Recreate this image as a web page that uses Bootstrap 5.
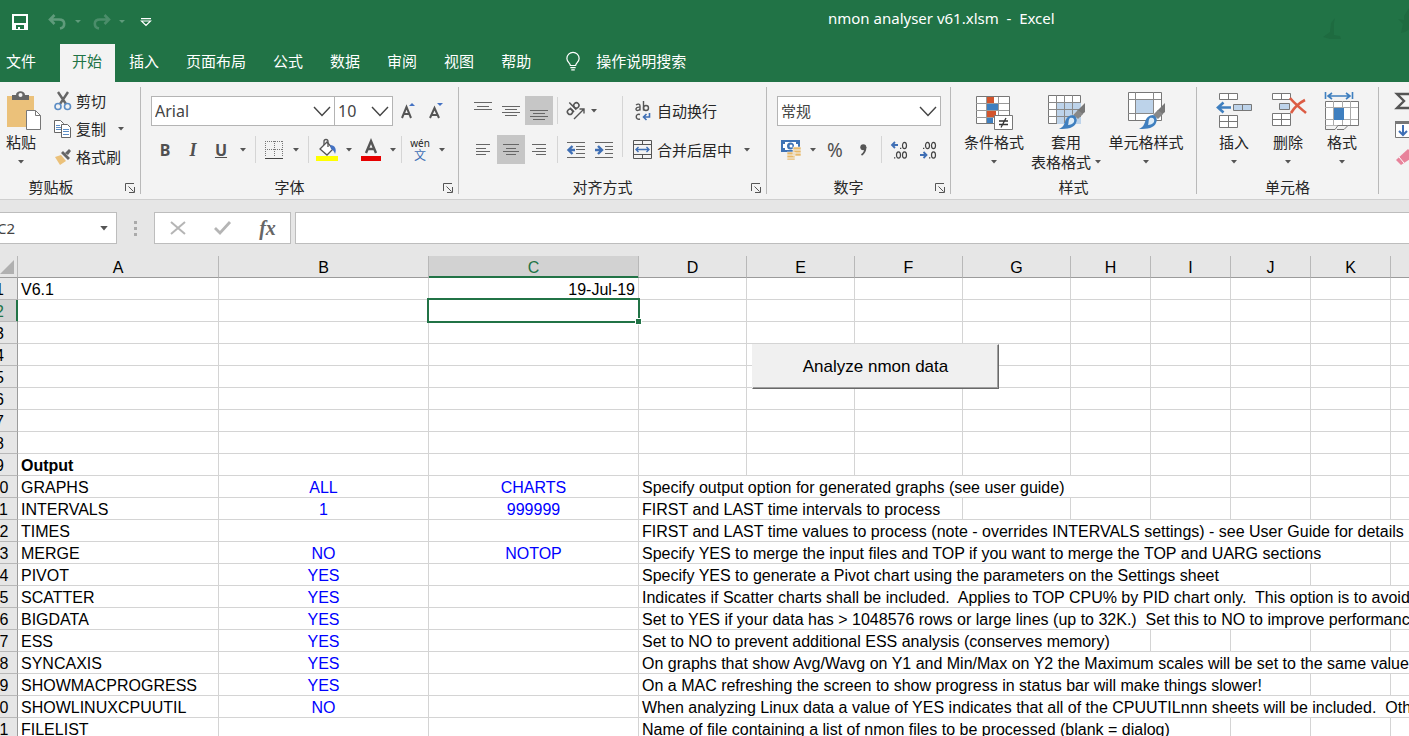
<!DOCTYPE html>
<html lang="zh-CN">
<head>
<meta charset="utf-8">
<meta name="viewport" content="width=device-width, initial-scale=1">
<title>nmon analyser v61.xlsm - Excel</title>
<link rel="stylesheet" href="https://cdn.jsdelivr.net/npm/bootstrap@5.3.0/dist/css/bootstrap.min.css">
<script src="https://cdn.jsdelivr.net/npm/bootstrap@5.3.0/dist/js/bootstrap.bundle.min.js"></script>
<style>
:root{--xl-green:#217346;--xl-ribbon:#f3f3f3;--xl-frame:#e6e6e6;--xl-ink:#262626}
body{font-family:"Noto Sans","Noto Sans CJK SC",sans-serif;font-size:15px;line-height:20px;color:var(--xl-ink);background:#fff}
.app{height:100vh}
button{background:none;border:0;padding:0;color:inherit;line-height:20px}
svg{display:block;flex:none;overflow:visible}
.titlebar{background:var(--xl-green);height:44px;color:#fff;padding-left:11px}
.title-text{left:828px;top:8px;white-space:pre}
.quick{gap:11px}
.tabs{background:var(--xl-green);height:38px;gap:2px}
.tabs .nav-link{color:#fff;padding:7px 13px 11px 12px;border-radius:0}
.tabs .file-tab{padding-left:6px;margin-right:9px}
.tabs .nav-link.active{background:var(--xl-ribbon);color:var(--xl-green)}
.ribbon{background:var(--xl-ribbon);border-bottom:1px solid #cfcfcf;height:118px;padding:5px 0}
.group{border-right:1px solid #b9b9b9;flex:none}
.group-body{height:90px;padding:9px 0 0 10px}
.group-foot{height:17px}
.group-foot .foot-name{line-height:20px;margin-top:2px}
.launch{width:20px}
.g-clip{width:141px}.g-font{width:318px}.g-align{width:308px}.g-num{width:184px}.g-style{width:246px}.g-cell{width:182px}
.g-clip .group-body{padding:0}
.g-clip .big{margin-top:4px}
.g-style .group-body{padding:4px 0 0 9px}
.g-cell .group-body{padding-top:4px}
.g-clip .foot-name{padding-right:18px}
.tools{height:29px}
.tools-2{margin-top:10px}
.tool{width:28px;height:29px;display:flex;align-items:center;justify-content:center}
.tool.on{background:#c6c6c6}
.face{color:#505050;font-size:16px}
.face-serif{font-family:"Liberation Serif",serif;font-size:18px}
.face-pct{font-size:19px;color:#505050}
.pin{font-size:10px;line-height:12px}
.han{font-size:12px;line-height:13px;color:#3f6fb5}
.drop{width:16px;height:29px;display:flex;align-items:center;justify-content:center}
.rule{width:1px;height:27px;background:#d5d5d5;flex:none}
.big{display:flex;flex-direction:column;align-items:center;flex:none}
.big .pic{height:40px;margin-bottom:1px;display:flex;align-items:flex-end}
.big .arrow{height:20px;display:flex;align-items:center}
.w-54{width:54px}.w-68{width:68px}.w-76{width:76px}.w-84{width:84px}.w-42{width:42px}
.small-cmd{display:flex;align-items:center;height:29px;gap:4px}
.stack .small-cmd{height:28px}
.wrap-cmds{margin-left:10px}
.form-select.combo{height:30px;border:1px solid #b4b4b4;border-radius:0;font-size:16px;line-height:20px;color:#444;padding:3px 24px 4px 3px;background-color:#fff;background-size:18px 11px;background-position:right 3px center;
--bs-form-select-bg-img:url("data:image/svg+xml,%3csvg xmlns='http://www.w3.org/2000/svg' viewBox='0 0 18 11'%3e%3cpath fill='none' stroke='%23444' stroke-width='1.4' d='M1 1l8 8.500 8-8.500'/%3e%3c/svg%3e")}
.combo-font{width:184px}.form-select.combo-size{width:59px;margin-left:-1px}.form-select.combo-num{width:164px;font-size:15px}
.fbar{background:var(--xl-frame);height:56px;padding-top:12px}
.fbox{height:32px;background:#fff;border:1px solid #bdbdbd}
.namebox{width:117px;border-left:0}
.namebox input{width:80px;border:0;padding:0;margin-left:-3px;font-size:15px;color:#444;background:none}
.fkeys{width:137px}
.fkeys button{width:45px;height:30px;display:flex;align-items:center;justify-content:center}
.fkeys .fx{font:italic bold 20px/28px "Liberation Serif",serif;color:#666}
.fline{font-size:15px;padding:0 6px;min-width:0}
.sheet{font-family:"Liberation Sans",Arial,sans-serif;font-size:16px;color:#000;min-height:0}
.cells{table-layout:fixed;width:1489px;margin-left:-18px;border-collapse:separate;border-spacing:0}
.cells th,.cells td{height:22px;padding:3px 3px 0 3px;line-height:18px;border-right:1px solid #d4d4d4;border-bottom:1px solid #d4d4d4;white-space:nowrap}
.cells th{padding:3px 0 0;text-align:center;font-weight:400;background:var(--xl-frame);border-color:#b8b8b8}
.cells thead th{border-bottom-color:#9b9b9b}
.cells tbody th{border-right-color:#9b9b9b}
.cells .picked{background:#d2d2d2;color:var(--xl-green)}
.cells thead .picked{box-shadow:inset 0 -1px var(--xl-green);border-bottom-color:var(--xl-green)}
.cells tbody .picked{box-shadow:inset -1px 0 var(--xl-green);border-right-color:var(--xl-green)}
.cells .val{text-align:center;color:#00f}
.corner{position:relative}
.corner svg{position:absolute;right:3px;bottom:3px}
.sel{position:absolute;inset:-2px;border:2px solid var(--xl-green);z-index:1}
.sel::after{content:"";position:absolute;right:-4px;bottom:-4px;width:7px;height:7px;background:var(--xl-green);border:1px solid #fff}
.run-btn{left:752px;top:88px;width:247px;height:45px;font-size:17px;background:#f0f0f0;border:1px solid;border-color:#f0f0f0 #696969 #696969 #f0f0f0;box-shadow:inset -1px -1px #a0a0a0;z-index:2}
</style>
</head>
<body>
<svg width="0" height="0" class="position-absolute" aria-hidden="true">
<symbol id="caret" viewBox="0 0 6 4"><path fill="#555" d="M0 0h6L3 3.500z"/></symbol>
<symbol id="launch" viewBox="0 0 10 10"><path fill="none" stroke="#555" d="M.5 8V.5H9M3.500 3.500l5 5M9.500 4v5.500H4"/></symbol>
<symbol id="brush" viewBox="0 0 28 28"><path fill="#777" d="M27 1v9l-7 6-4-4z"/><path fill="#fff" d="M19 9l4 4-5 5-5-4z"/><path fill="#888" d="M20 8l5 4-5 5-5-4z"/><path fill="#3f7fbf" d="M15 13c3 1 5 4 3 8-2 5-8 6-17 6 4-2 5-4 6-7 1-4 4-7 8-7z"/><path fill="#dcebf7" d="M12 16c3-1 5 1 4 4-1 2-4 3-6 3 1-2 0-5 2-7z"/></symbol>
</svg>
<div class="app d-flex flex-column overflow-hidden">

<header class="titlebar d-flex position-relative flex-shrink-0 overflow-hidden">
  <div class="quick d-flex align-items-center">
    <button type="button" aria-label="保存" class="me-2"><svg width="18" height="18" viewBox="0 0 18 18"><path fill="#fff" fill-rule="evenodd" d="M1 1h16v16H1zM3 3v7h12V3zM5 12v4h2v-2h2v2h4v-4z"/></svg></button>
    <button type="button" aria-label="撤消" class="d-flex align-items-center gap-2"><svg width="19" height="16" viewBox="0 0 19 16"><path fill="none" stroke="#5f9b7b" stroke-width="2.600" d="M6.500 1L2 5.500 6.500 10M2 5.500h9c7 0 6.500 8 1 9"/></svg><svg width="6" height="4" viewBox="0 0 6 4"><path fill="#5f9b7b" d="M0 0h6L3 3z"/></svg></button>
    <button type="button" aria-label="恢复" class="d-flex align-items-center gap-2"><svg width="19" height="16" viewBox="0 0 19 16"><path fill="none" stroke="#4b8d6a" stroke-width="2.600" d="M12.500 1L17 5.500 12.500 10M17 5.500H8c-7 0-6.500 8-1 9"/></svg><svg width="6" height="4" viewBox="0 0 6 4"><path fill="#5f9b7b" d="M0 0h6L3 3z"/></svg></button>
    <button type="button" aria-label="自定义快速访问工具栏" class="ms-1"><svg width="12" height="9" viewBox="0 0 12 9"><path fill="none" stroke="#fff" stroke-width="1.200" d="M1 .6h10M1.500 3h9L6 7.500z"/></svg></button>
  </div>
  <span class="title-text position-absolute">nmon analyser v61.xlsm  -  Excel</span>
  <svg class="ms-auto mt-3" width="90" height="28" viewBox="0 0 90 28"><path fill="#1e6b40" d="M16 2l-4 5-1 9-7 5 7 2h11l-1-3-6-1V7zM90-8l-5 8v4l-6-1 5 5-2 9 4-1 5-3z"/></svg>
</header>

<nav class="tabs nav flex-nowrap flex-shrink-0 overflow-hidden">
  <a class="nav-link file-tab" href="#">文件</a>
  <a class="nav-link active" href="#">开始</a>
  <a class="nav-link" href="#">插入</a>
  <a class="nav-link" href="#">页面布局</a>
  <a class="nav-link" href="#">公式</a>
  <a class="nav-link" href="#">数据</a>
  <a class="nav-link" href="#">审阅</a>
  <a class="nav-link" href="#">视图</a>
  <a class="nav-link" href="#">帮助</a>
  <a class="nav-link d-flex ms-2 gap-3" href="#"><svg width="14" height="22" viewBox="0 0 16 22" fill="none" stroke="#fff" stroke-width="1.400"><path d="M5 15c0-3-4-4-4-8a7 7 0 0 1 14 0c0 4-4 5-4 8zM5 17.500h6M6 20h4"/></svg>操作说明搜索</a>
</nav>

<section class="ribbon d-flex flex-shrink-0 overflow-hidden">
  <div class="group g-clip">
    <div class="group-body d-flex">
      <button type="button" class="big w-42"><span class="pic"><svg width="42" height="40" viewBox="-4 0 42 40"><path fill="#ebc17a" d="M3 5h27v31H3z"/><path fill="#666" d="M8 4h4c0-5 9-5 9 0h4v5H8z"/><circle cx="16.500" cy="4" r="2" fill="#f3f3f3"/><path fill="#fff" stroke="#777" d="M22.500 19.500h9l5 5v14h-14z"/><path fill="none" stroke="#777" d="M31.500 19.500v5h5"/></svg></span>粘贴<span class="arrow"><svg width="6" height="4"><use href="#caret"/></svg></span></button>
      <div class="stack ms-2 ps-1">
        <button type="button" class="small-cmd"><svg width="18" height="20" viewBox="0 0 18 20" fill="none"><path stroke="#666" stroke-width="2.400" d="M4 1l8 12M14 1L6 13"/><circle cx="4" cy="15.500" r="3" stroke="#5b8cc4" stroke-width="1.600"/><circle cx="13.500" cy="15.500" r="3" stroke="#5b8cc4" stroke-width="1.600"/></svg>剪切</button>
        <button type="button" class="small-cmd"><svg width="18" height="20" viewBox="0 0 18 20" fill="#fff" stroke="#666"><path d="M.5 1.500h6l3 3v9h-9z"/><path stroke="#5b8cc4" d="M2 6.500h4M2 8.500h5M2 10.500h5"/><path d="M7.500 5.500h6l3 3v10h-9z"/><path stroke="#5b8cc4" d="M9 10.500h6M9 12.500h6M9 15.500h6"/></svg>复制<svg class="ms-2" width="6" height="4"><use href="#caret"/></svg></button>
        <button type="button" class="small-cmd"><svg width="18" height="18" viewBox="0 0 18 18"><path fill="#ebc17a" d="M1 9l6-2 5 6-6 4z"/><path fill="#666" d="M7 5l2-2 7 7-2 2zM11 5l4-4 2 2-3 4z"/></svg>格式刷</button>
      </div>
    </div>
    <div class="group-foot d-flex align-items-center"><span class="foot-name flex-grow-1 text-center">剪贴板</span><button type="button" class="launch" aria-label="剪贴板设置"><svg class="mx-auto mt-1" width="10" height="10"><use href="#launch"/></svg></button></div>
  </div>

  <div class="group g-font">
    <div class="group-body">
      <div class="tools d-flex">
        <select class="form-select combo combo-font" aria-label="字体"><option>Arial</option></select>
        <select class="form-select combo combo-size" aria-label="字号"><option>10</option></select>
        <button type="button" class="tool" aria-label="增大字号"><svg width="14" height="18" viewBox="0 0 14 18"><path fill="none" stroke="#555" stroke-width="2" d="M2 16L6.500 5 11 16M3.500 12h6"/><path fill="#4472c4" d="M9 4l3-3 3 3z"/></svg></button>
        <button type="button" class="tool" aria-label="减小字号"><svg width="14" height="18" viewBox="0 0 14 18"><path fill="none" stroke="#555" stroke-width="2" d="M2 16L6.500 6l4.500 10M3.500 13h6"/><path fill="#4472c4" d="M9 1h6l-3 3z"/></svg></button>
      </div>
      <div class="tools tools-2 d-flex align-items-center">
        <button type="button" class="tool face fw-bold">B</button>
        <button type="button" class="tool face face-serif fw-bold fst-italic">I</button>
        <button type="button" class="tool face fw-bold text-decoration-underline">U</button>
        <button type="button" class="drop" aria-label="下划线样式"><svg width="6" height="4"><use href="#caret"/></svg></button>
        <span class="rule ms-1"></span>
        <button type="button" class="tool ms-1" aria-label="边框"><svg width="18" height="18" viewBox="0 0 18 18" fill="none" stroke="#777"><path stroke-dasharray="1 1" d="M.5 0v16M17.500 0v16M0 .5h18M9.500 0v16M0 8.500h18"/><path stroke="#444" d="M0 17.500h18"/></svg></button>
        <button type="button" class="drop" aria-label="边框样式"><svg width="6" height="4"><use href="#caret"/></svg></button>
        <span class="rule ms-1"></span>
        <button type="button" class="tool ms-1" aria-label="填充颜色"><svg width="22" height="22" viewBox="0 0 22 22"><path fill="#fff" stroke="#555" stroke-width="1.300" d="M11 3l6 7-6 6-7-6z"/><path fill="none" stroke="#555" stroke-width="1.300" d="M8 6V2.500a2 2 0 0 1 4 0V8"/><path fill="#4472c4" d="M14 6c5 0 7 4 5 9-1-3-2-4-4-5z"/><path fill="#ff0" d="M0 17h22v5H0z"/></svg></button>
        <button type="button" class="drop" aria-label="填充颜色选择"><svg width="6" height="4"><use href="#caret"/></svg></button>
        <button type="button" class="tool" aria-label="字体颜色"><svg width="20" height="22" viewBox="0 0 20 22"><path fill="none" stroke="#555" stroke-width="2.400" d="M5 14L10 2l5 12M7 10h6"/><path fill="#e60000" d="M0 17h20v5H0z"/></svg></button>
        <button type="button" class="drop" aria-label="字体颜色选择"><svg width="6" height="4"><use href="#caret"/></svg></button>
        <span class="rule"></span>
        <button type="button" class="tool ms-1 flex-column" aria-label="拼音"><span class="pin">wén</span><span class="han">文</span></button>
        <button type="button" class="drop" aria-label="拼音设置"><svg width="6" height="4"><use href="#caret"/></svg></button>
      </div>
    </div>
    <div class="group-foot d-flex align-items-center"><span class="foot-name flex-grow-1 text-center">字体</span><button type="button" class="launch" aria-label="字体设置"><svg class="mx-auto mt-1" width="10" height="10"><use href="#launch"/></svg></button></div>
  </div>

  <div class="group g-align">
    <div class="group-body d-flex">
      <div>
        <div class="tools d-flex align-items-center">
          <button type="button" class="tool" aria-label="顶端对齐"><svg width="18" height="18" viewBox="0 0 18 18" stroke="#666"><path d="M0 .5h18M3 4.500h12M0 7.500h18"/></svg></button>
          <button type="button" class="tool" aria-label="垂直居中"><svg width="18" height="18" viewBox="0 0 18 18" stroke="#666"><path d="M0 4.500h18M3 7.500h12M0 10.500h18M3 13.500h12"/></svg></button>
          <button type="button" class="tool on" aria-label="底端对齐"><svg width="18" height="18" viewBox="0 0 18 18" stroke="#666"><path d="M0 8.500h18M3 11.500h12M0 14.500h18M3 17.500h12"/></svg></button>
          <span class="rule ms-1"></span>
          <button type="button" class="tool ms-1" aria-label="方向"><svg width="20" height="20" viewBox="0 0 20 20"><g fill="none" stroke="#555" stroke-width="1.500" transform="translate(4 15) rotate(-45)"><circle cx="3" cy="-3" r="2.600"/><path d="M5.800-6V0M9-10V0"/><circle cx="12" cy="-3" r="2.600"/></g><path fill="none" stroke="#555" stroke-width="1.400" d="M8 18L18 8M13.500 8H18v4.500"/></svg></button>
          <button type="button" class="drop" aria-label="方向选择"><svg class="me-2" width="6" height="4"><use href="#caret"/></svg></button>
        </div>
        <div class="tools tools-2 d-flex align-items-center">
          <button type="button" class="tool" aria-label="左对齐"><svg width="16" height="16" viewBox="0 0 16 16" stroke="#666"><path d="M1 2.500h14M1 6.500h10M1 9.500h14M1 12.500h10"/></svg></button>
          <button type="button" class="tool on" aria-label="居中"><svg width="16" height="16" viewBox="0 0 16 16" stroke="#666"><path d="M0 2.500h16M3 6.500h10M0 9.500h16M3 12.500h10"/></svg></button>
          <button type="button" class="tool" aria-label="右对齐"><svg width="16" height="16" viewBox="0 0 16 16" stroke="#666"><path d="M1 2.500h14M5 6.500h10M1 9.500h14M5 12.500h10"/></svg></button>
          <span class="rule ms-1"></span>
          <button type="button" class="tool ms-1" aria-label="减少缩进量"><svg width="18" height="18" viewBox="0 0 18 18" fill="none" stroke="#666"><path d="M0 1.500h18M9 5.500h9M9 8.500h9M9 12.500h9M0 16.500h18"/><path stroke="#3f6fb5" stroke-width="2.400" d="M8 9H2M5.500 5L1.500 9l4 4"/></svg></button>
          <button type="button" class="tool" aria-label="增加缩进量"><svg width="18" height="18" viewBox="0 0 18 18" fill="none" stroke="#666"><path d="M0 1.500h18M10 5.500h8M10 8.500h8M10 12.500h8M0 16.500h18"/><path stroke="#3f6fb5" stroke-width="2.400" d="M0 9h6M3 5l4 4-4 4"/></svg></button>
        </div>
      </div>
      <span class="rule h-75 ms-1"></span>
      <div class="wrap-cmds">
        <button type="button" class="small-cmd"><svg width="20" height="22" viewBox="0 0 20 22" fill="none" stroke="#555" stroke-width="1.400"><path d="M3 5c2-1.500 4-1 4 1v4.500M7 7.200c-5-.4-5 3.600-2 3.200 1 0 2-.8 2-1.800M10.500 1v9.500"/><circle cx="13" cy="8" r="2.500"/><path d="M7 14.500c-5-1.500-5 6 0 4.500"/><path stroke="#3f6fb5" stroke-width="1.600" d="M16.500 13v4H11M13.500 14L10.500 17l3 3"/></svg>自动换行</button>
        <button type="button" class="small-cmd tools-2"><svg width="20" height="20" viewBox="0 0 20 20" fill="none" stroke="#555"><path d="M.5.5h18v18H.500zM.5 4.500h18M.5 14.500h18M9.500 .5v4M9.500 14.500v4"/><path stroke="#3f6fb5" stroke-width="1.400" d="M3 9.500h13M5.500 7L3 9.500 5.500 12M13.500 7L16 9.500 13.500 12"/></svg>合并后居中<svg class="ms-2" width="6" height="4"><use href="#caret"/></svg></button>
      </div>
    </div>
    <div class="group-foot d-flex align-items-center"><span class="foot-name flex-grow-1 text-center">对齐方式</span><button type="button" class="launch" aria-label="对齐设置"><svg class="mx-auto mt-1" width="10" height="10"><use href="#launch"/></svg></button></div>
  </div>

  <div class="group g-num">
    <div class="group-body">
      <div class="tools"><select class="form-select combo combo-num" aria-label="数字格式"><option>常规</option></select></div>
      <div class="tools tools-2 d-flex align-items-center">
        <button type="button" class="tool" aria-label="会计数字格式"><svg width="20" height="20" viewBox="0 0 20 20"><path fill="#3f73b5" d="M0 0h19v12H0z"/><path fill="#fff" d="M2 2h15v8H2z"/><circle cx="9.500" cy="6" r="3.500" fill="#3f73b5"/><circle cx="10" cy="6" r="1.500" fill="#fff"/><path fill="#3f73b5" d="M2 2h2v2H2zM15 2h2v2h-2zM2 8h2v2H2z"/><path fill="#e8b96a" stroke="#f3f3f3" stroke-width=".6" d="M12 7h8v3h-8zM12 10h8v3h-8zM6 12h8v3H6zM12 13h8v3h-8zM6 15h8v3H6zM6 18h8v2H6z"/></svg></button>
        <button type="button" class="drop" aria-label="会计格式选择"><svg width="6" height="4"><use href="#caret"/></svg></button>
        <button type="button" class="tool face-pct">%</button>
        <button type="button" class="tool" aria-label="千位分隔样式"><svg width="7" height="12" viewBox="0 0 7 12"><circle cx="3.300" cy="3.300" r="3" fill="#555"/><path fill="none" stroke="#555" stroke-width="1.800" d="M5.500 3c0 4-1 6-4 8"/></svg></button>
        <span class="rule ms-1"></span>
        <button type="button" class="tool ms-1" aria-label="增加小数位数"><svg width="18" height="20" viewBox="0 0 18 20" fill="none" stroke="#444" stroke-width="1.200"><ellipse cx="13.500" cy="5.500" rx="2" ry="3.200"/><ellipse cx="7.500" cy="15" rx="2" ry="3.200"/><ellipse cx="13.500" cy="15" rx="2" ry="3.200"/><path d="M9 8.300h1.300M3 17.800h1.300"/><path stroke="#3f6fb5" stroke-width="1.800" d="M7 5H1M4 2L1 5l3 3"/></svg></button>
        <button type="button" class="tool" aria-label="减少小数位数"><svg width="18" height="20" viewBox="0 0 18 20" fill="none" stroke="#444" stroke-width="1.200"><ellipse cx="8.500" cy="5.500" rx="2" ry="3.200"/><ellipse cx="14.500" cy="5.500" rx="2" ry="3.200"/><ellipse cx="14.500" cy="15" rx="2" ry="3.200"/><path d="M4 8.300h1.300M10 17.800h1.300"/><path stroke="#3f6fb5" stroke-width="1.800" d="M1 15h6M4.500 12l3 3-3 3"/></svg></button>
      </div>
    </div>
    <div class="group-foot d-flex align-items-center"><span class="foot-name flex-grow-1 text-center">数字</span><button type="button" class="launch" aria-label="数字设置"><svg class="mx-auto mt-1" width="10" height="10"><use href="#launch"/></svg></button></div>
  </div>

  <div class="group g-style">
    <div class="group-body d-flex">
      <button type="button" class="big w-68"><span class="pic"><svg width="38" height="38" viewBox="0 0 38 38"><path fill="#fff" stroke="#777" d="M1.500 3.500h33v27h-33z"/><path stroke="#999" d="M1 10.500h33M1 17.500h33M1 24.500h33M11.500 4v26M23.500 4v26"/><path fill="#d2552d" d="M12 4h7v6h-7zM12 18h9v6h-9z"/><path fill="#3f7fbf" d="M12 11h11v6H12zM12 25h6v5h-6z"/><path fill="#fff" stroke="#777" d="M19.500 22.500h18v14h-18z"/><path fill="none" stroke="#333" stroke-width="1.300" d="M24 28h9M24 31.500h9M31 25l-5 9.500"/></svg></span>条件格式<span class="arrow"><svg width="6" height="4"><use href="#caret"/></svg></span></button>
      <button type="button" class="big w-76"><span class="pic"><svg width="38" height="38" viewBox="0 0 38 38"><path fill="#fff" stroke="#777" d="M1.500 2.500h32v28h-32z"/><path fill="#bdd3ea" d="M10 9h24v22H10z"/><path stroke="#888" d="M1 9.500h33M1 16.500h33M1 23.500h33M9.500 2v28M17.500 2v28M25.500 2v28"/><svg x="11" y="9" width="28" height="28"><use href="#brush"/></svg></svg></span>套用<span class="arrow gap-1 text-nowrap">表格格式<svg width="6" height="4"><use href="#caret"/></svg></span></button>
      <button type="button" class="big w-84"><span class="pic"><svg width="38" height="40" viewBox="0 0 38 40"><path fill="#fff" stroke="#777" d="M1.500 1.500h33v28h-33z"/><path fill="#bdd3ea" d="M9 8h17v14H9z"/><path stroke="#888" d="M1 8.500h33M1 22.500h33M8.500 1v28M26.500 1v28"/><svg x="11" y="11" width="28" height="28"><use href="#brush"/></svg></svg></span>单元格样式<span class="arrow"><svg width="6" height="4"><use href="#caret"/></svg></span></button>
    </div>
    <div class="group-foot d-flex align-items-center"><span class="foot-name flex-grow-1 text-center">样式</span></div>
  </div>

  <div class="group g-cell">
    <div class="group-body d-flex">
      <button type="button" class="big w-54"><span class="pic"><svg width="38" height="40" viewBox="0 0 38 40"><g fill="#fff" stroke="#777"><path d="M4.500 2.500h18v6h-18zM13.500 2.500v6M4.500 24.500h18v12h-18zM4.500 30.500h18M13.500 24.500v12"/><path fill="#bdd3ea" d="M18.500 13.500h18v6h-18zM27.500 13.500v6"/></g><path fill="none" stroke="#3f7fbf" stroke-width="2.600" d="M16 16.500H4M8.500 11.500l-5.500 5 5.500 5"/></svg></span>插入<span class="arrow"><svg width="6" height="4"><use href="#caret"/></svg></span></button>
      <button type="button" class="big w-54"><span class="pic"><svg width="36" height="40" viewBox="0 0 36 40"><g fill="#fff" stroke="#777"><path d="M2.500 2.500h18v6h-18zM11.500 2.500v6M2.500 22.500h18v12h-18zM2.500 28.500h18M11.500 22.500v12"/><path fill="#bdd3ea" d="M9.500 12.500h10v6h-10z"/></g><path fill="none" stroke="#dc5c44" stroke-width="2.600" d="M20 7c4 5 9 9 16 15M35 9c-6 3-11 8-14 13"/></svg></span>删除<span class="arrow"><svg width="6" height="4"><use href="#caret"/></svg></span></button>
      <button type="button" class="big w-54"><span class="pic"><svg width="38" height="40" viewBox="0 0 38 40"><path fill="none" stroke="#3f7fbf" stroke-width="1.600" d="M5 5h22M9 2L5 5l4 3M23 2l4 3-4 3M2.500 1v7M29.500 1v7"/><path fill="#fff" stroke="#777" d="M2.500 10.500h33v24h-33z"/><path stroke="#aaa" d="M2 16.500h33M2 28.500h33M10.500 10v24M19.500 10v24M27.500 10v24"/><path fill="#3f7fbf" d="M11 17h10v12H11z"/><path fill="#f3f3f3" stroke="#777" d="M2.500 34.500v4H12l3-4M14 38.500h7l4-4"/></svg></span>格式<span class="arrow"><svg width="6" height="4"><use href="#caret"/></svg></span></button>
    </div>
    <div class="group-foot d-flex align-items-center"><span class="foot-name flex-grow-1 text-center">单元格</span></div>
  </div>

  <div class="stack ps-3 flex-shrink-0">
    <button type="button" class="small-cmd" aria-label="自动求和"><svg width="18" height="20" viewBox="0 0 18 20"><path fill="none" stroke="#555" stroke-width="2.400" d="M16 6V3H2l7 7-7 7h14v-3"/></svg></button>
    <button type="button" class="small-cmd" aria-label="填充"><svg width="18" height="20" viewBox="0 0 18 20"><path fill="#fff" stroke="#777" d="M.5 2.500h18v16H.500z"/><path fill="#777" d="M0 2h18v3H0z"/><path fill="none" stroke="#3f6fb5" stroke-width="2" d="M8 6v10M4 12l4 4 4-4"/></svg></button>
    <button type="button" class="small-cmd" aria-label="清除"><svg width="18" height="20" viewBox="0 0 18 20"><path fill="#e8839b" d="M1 13L13 2l5 5v3L6 18z"/><path stroke="#fff" d="M4 10l5 6"/></svg></button>
  </div>
</section>

<div class="fbar d-flex flex-shrink-0">
  <div class="fbox namebox d-flex align-items-center justify-content-between flex-shrink-0 overflow-hidden"><input type="text" value="C2" aria-label="名称框"><button type="button" class="pe-2" aria-label="名称列表"><svg width="8" height="5"><use href="#caret"/></svg></button></div>
  <svg class="mx-3" width="5" height="32" viewBox="0 0 5 32"><path fill="#aaa" d="M1 9h3v3H1zM1 15h3v3H1zM1 21h3v3H1z"/></svg>
  <div class="fbox fkeys d-flex flex-shrink-0">
    <button type="button" aria-label="取消"><svg width="16" height="14" viewBox="0 0 16 14"><path stroke="#b5b5b5" stroke-width="2" d="M1 1l14 12M15 1L1 13"/></svg></button>
    <button type="button" aria-label="输入"><svg width="18" height="14" viewBox="0 0 18 14"><path fill="none" stroke="#b5b5b5" stroke-width="2.800" d="M1 7l5 5L16 1"/></svg></button>
    <button type="button" class="fx">fx</button>
  </div>
  <input type="text" class="fbox fline flex-grow-1 ms-1 border-end-0" aria-label="编辑栏">
</div>

<main class="sheet position-relative flex-grow-1 overflow-hidden">
<table class="cells">
<colgroup><col style="width:36px"><col style="width:201px"><col style="width:210px"><col style="width:210px"><col style="width:108px"><col style="width:108px"><col style="width:108px"><col style="width:108px"><col style="width:80px"><col style="width:80px"><col style="width:80px"><col style="width:80px"><col style="width:80px"></colgroup>
<thead><tr><th class="corner"><svg width="14" height="14" viewBox="0 0 14 14"><path fill="#b0b0b0" d="M14 0v14H0z"/></svg></th><th>A</th><th>B</th><th class="picked">C</th><th>D</th><th>E</th><th>F</th><th>G</th><th>H</th><th>I</th><th>J</th><th>K</th><th>L</th></tr></thead>
<tbody>
<tr><th>1</th><td>V6.1</td><td></td><td class="text-end">19-Jul-19</td><td></td><td></td><td></td><td></td><td></td><td></td><td></td><td></td><td></td></tr>
<tr><th class="picked">2</th><td></td><td></td><td class="position-relative"><span class="sel"></span></td><td></td><td></td><td></td><td></td><td></td><td></td><td></td><td></td><td></td></tr>
<tr><th>3</th><td></td><td></td><td></td><td></td><td></td><td></td><td></td><td></td><td></td><td></td><td></td><td></td></tr>
<tr><th>4</th><td></td><td></td><td></td><td></td><td></td><td></td><td></td><td></td><td></td><td></td><td></td><td></td></tr>
<tr><th>5</th><td></td><td></td><td></td><td></td><td></td><td></td><td></td><td></td><td></td><td></td><td></td><td></td></tr>
<tr><th>6</th><td></td><td></td><td></td><td></td><td></td><td></td><td></td><td></td><td></td><td></td><td></td><td></td></tr>
<tr><th>7</th><td></td><td></td><td></td><td></td><td></td><td></td><td></td><td></td><td></td><td></td><td></td><td></td></tr>
<tr><th>8</th><td></td><td></td><td></td><td></td><td></td><td></td><td></td><td></td><td></td><td></td><td></td><td></td></tr>
<tr><th>9</th><td class="fw-bold">Output</td><td></td><td></td><td></td><td></td><td></td><td></td><td></td><td></td><td></td><td></td><td></td></tr>
<tr><th>10</th><td>GRAPHS</td><td class="val">ALL</td><td class="val">CHARTS</td><td colspan="5">Specify output option for generated graphs (see user guide)</td><td></td><td></td><td></td><td></td></tr>
<tr><th>11</th><td>INTERVALS</td><td class="val">1</td><td class="val">999999</td><td colspan="3">FIRST and LAST time intervals to process</td><td></td><td></td><td></td><td></td><td></td><td></td></tr>
<tr><th>12</th><td>TIMES</td><td></td><td></td><td colspan="9">FIRST and LAST time values to process (note - overrides INTERVALS settings) - see User Guide for details</td></tr>
<tr><th>13</th><td>MERGE</td><td class="val">NO</td><td class="val">NOTOP</td><td colspan="8">Specify YES to merge the input files and TOP if you want to merge the TOP and UARG sections</td><td></td></tr>
<tr><th>14</th><td>PIVOT</td><td class="val">YES</td><td></td><td colspan="7">Specify YES to generate a Pivot chart using the parameters on the Settings sheet</td><td></td><td></td></tr>
<tr><th>15</th><td>SCATTER</td><td class="val">YES</td><td></td><td colspan="9">Indicates if Scatter charts shall be included.&nbsp; Applies to TOP CPU% by PID chart only.&nbsp; This option is to avoid</td></tr>
<tr><th>16</th><td>BIGDATA</td><td class="val">YES</td><td></td><td colspan="9">Set to YES if your data has &gt; 1048576 rows or large lines (up to 32K.)&nbsp; Set this to NO to improve performance</td></tr>
<tr><th>17</th><td>ESS</td><td class="val">YES</td><td></td><td colspan="5">Set to NO to prevent additional ESS analysis (conserves memory)</td><td></td><td></td><td></td><td></td></tr>
<tr><th>18</th><td>SYNCAXIS</td><td class="val">YES</td><td></td><td colspan="9">On graphs that show Avg/Wavg on Y1 and Min/Max on Y2 the Maximum scales will be set to the same value</td></tr>
<tr><th>19</th><td>SHOWMACPROGRESS</td><td class="val">YES</td><td></td><td colspan="7">On a MAC refreshing the screen to show progress in status bar will make things slower!</td><td></td><td></td></tr>
<tr><th>20</th><td>SHOWLINUXCPUUTIL</td><td class="val">NO</td><td></td><td colspan="9">When analyzing Linux data a value of YES indicates that all of the CPUUTILnnn sheets will be included.&nbsp; Otherwise</td></tr>
<tr><th>21</th><td>FILELIST</td><td></td><td></td><td colspan="6">Name of file containing a list of nmon files to be processed (blank = dialog)</td><td></td><td></td><td></td></tr>
</tbody>
</table>
<button type="button" class="run-btn position-absolute">Analyze nmon data</button>
</main>
</div>
</body>
</html>
